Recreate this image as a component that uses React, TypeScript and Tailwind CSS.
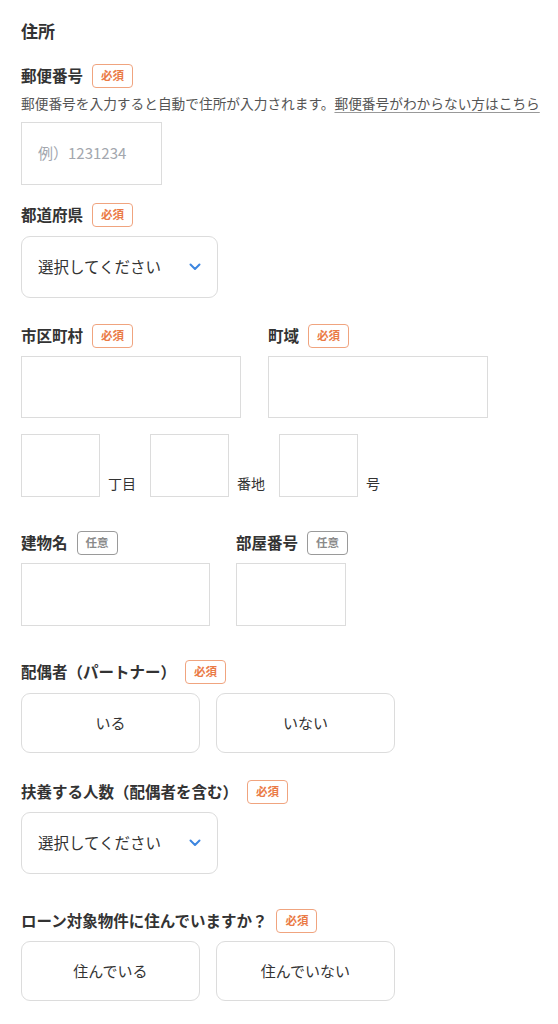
import React from 'react';

const font = { fontFamily: '"Noto Sans CJK JP", "Noto Sans", sans-serif' };

const Badge: React.FC<{ optional?: boolean }> = ({ optional }) => (
  <span
    className={`inline-flex h-[24px] w-[41px] shrink-0 items-center justify-center rounded-[4px] border text-[11.5px] font-bold leading-none ${
      optional ? 'border-[#9a9a9a] text-[#8a8a8a]' : 'border-[#f0a47f] text-[#ea7a45]'
    }`}
  >
    {optional ? '任意' : '必須'}
  </span>
);

const Label: React.FC<{ text: string; optional?: boolean; className?: string }> = ({ text, optional, className }) => (
  <div className={`flex h-[24px] items-center gap-[9px] ${className ?? ''}`}>
    <span className="text-[15.5px] font-bold leading-none text-[#333]">{text}</span>
    <Badge optional={optional} />
  </div>
);

const Box: React.FC<{ className?: string; placeholder?: string }> = ({ className, placeholder }) => (
  <div className={`flex items-center border border-[#dcdcdc] bg-white px-[16px] ${className ?? ''}`}>
    {placeholder && <span className="text-[15px] text-[#a3a7ae]">{placeholder}</span>}
  </div>
);

const Select: React.FC<{ className?: string }> = ({ className }) => (
  <div
    className={`flex h-[62px] w-[197px] items-center justify-between rounded-[9px] border border-[#dcdcdc] bg-white pl-[16px] pr-[16px] ${className ?? ''}`}
  >
    <span className="text-[15.5px] text-[#333]">選択してください</span>
    <svg width="12" height="8" viewBox="0 0 12 8" fill="none">
      <path d="M1.5 1.5 L6 6 L10.5 1.5" stroke="#3d86e0" strokeWidth="2" strokeLinecap="round" strokeLinejoin="round" />
    </svg>
  </div>
);

const Choice: React.FC<{ text: string }> = ({ text }) => (
  <button className="flex h-[60px] w-[179px] items-center justify-center rounded-[9px] border border-[#dcdcdc] bg-white text-[15px] text-[#333]">
    {text}
  </button>
);

export default function App() {
  return (
    <div className="min-h-screen bg-white px-[21px] pt-[20px]" style={font}>
      <h2 className="text-[17px] font-bold leading-[22px] text-[#333]">住所</h2>

      <Label text="郵便番号" className="mt-[22px]" />
      <p className="mt-[6px] whitespace-nowrap text-[13.7px] leading-[18px] text-[#555]">
        郵便番号を入力すると自動で住所が入力されます。
        <a className="underline decoration-[#999] underline-offset-[3px]">郵便番号がわからない方はこちら</a>
      </p>
      <Box className="mt-[10px] h-[63px] w-[141px]" placeholder="例）1231234" />

      <Label text="都道府県" className="mt-[18px]" />
      <Select className="mt-[9px]" />

      <div className="mt-[26px] flex gap-[27px]">
        <div>
          <Label text="市区町村" />
          <Box className="mt-[8px] h-[62px] w-[220px]" />
        </div>
        <div>
          <Label text="町域" />
          <Box className="mt-[8px] h-[62px] w-[220px]" />
        </div>
      </div>

      <div className="mt-[16px] flex items-end gap-[14px]">
        {['丁目', '番地', '号'].map((t) => (
          <div key={t} className="flex items-end gap-[8px]">
            <Box className="h-[63px] w-[79px]" />
            <span className="mb-[4px] text-[14px] leading-[20px] text-[#333]">{t}</span>
          </div>
        ))}
      </div>

      <div className="mt-[34px] flex gap-[26px]">
        <div>
          <Label text="建物名" optional />
          <Box className="mt-[8px] h-[63px] w-[189px]" />
        </div>
        <div>
          <Label text="部屋番号" optional />
          <Box className="mt-[8px] h-[63px] w-[110px]" />
        </div>
      </div>

      <Label text="配偶者（パートナー）" className="mt-[34px]" />
      <div className="mt-[9px] flex gap-[16px]">
        <Choice text="いる" />
        <Choice text="いない" />
      </div>

      <Label text="扶養する人数（配偶者を含む）" className="mt-[27px]" />
      <Select className="mt-[8px]" />

      <Label text="ローン対象物件に住んでいますか？" className="mt-[35px]" />
      <div className="mt-[8px] flex gap-[16px]">
        <Choice text="住んでいる" />
        <Choice text="住んでいない" />
      </div>
    </div>
  );
}
